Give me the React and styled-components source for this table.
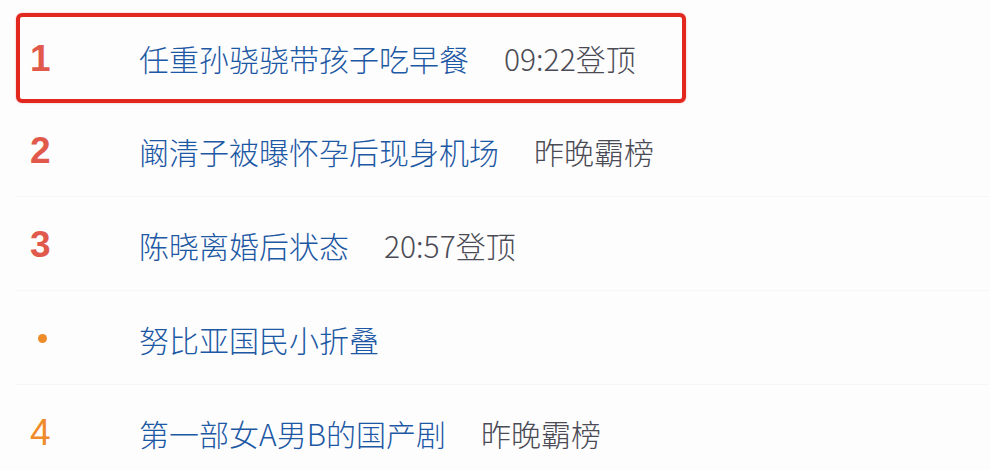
import React from "react";
import styled, { createGlobalStyle } from "styled-components";

const Global = createGlobalStyle`
  html, body { margin: 0; padding: 0; background: #fdfdfe; }
  body { font-family: "Noto Sans CJK SC", "Noto Sans", sans-serif; }
`;

const Page = styled.div`
  width: 990px;
  height: 470px;
  box-sizing: border-box;
  padding: 13px 0 0 16px;
  background: #fdfdfe;
  overflow: hidden;
`;

const List = styled.ul`
  list-style: none;
  margin: 0;
  padding: 0;
  display: flex;
  flex-direction: column;
  gap: 2px;
`;

const Row = styled.li`
  display: flex;
  align-items: center;
  box-sizing: border-box;
  height: ${(p) => (p.$hl ? "90px" : "92px")};
  width: ${(p) => (p.$hl ? "670px" : "974px")};
  padding-left: ${(p) => (p.$hl ? "8px" : "12px")};
  border: ${(p) => (p.$hl ? "4px solid #e2271f" : "none")};
  border-bottom: ${(p) => (p.$hl ? "4px solid #e2271f" : "1px solid #f5f6f9")};
  border-radius: ${(p) => (p.$hl ? "6px" : "0")};
  box-shadow: ${(p) => (p.$hl ? "0 0 2px rgba(226,39,31,0.4)" : "none")};
`;

const Rank = styled.span`
  width: 109px;
  flex: none;
  display: flex;
  align-items: center;
  font-family: "Liberation Sans", Arial, sans-serif;
  font-size: 37px;
  line-height: 1;
  font-weight: ${(p) => (p.$top ? 700 : 400)};
  color: ${(p) => (p.$top ? "#e0594a" : "#f08a2a")};
  padding-left: 2px;
`;

const Dot = styled.span`
  display: block;
  width: 9px;
  height: 9px;
  border-radius: 50%;
  background: #ee8c2a;
  margin-left: 8px;
`;

const Title = styled.span`
  font-size: 30px;
  font-weight: 300;
  line-height: 1;
  color: #1c58a3;
  white-space: nowrap;
`;

const Meta = styled.span`
  font-size: 30px;
  font-weight: 300;
  line-height: 1;
  color: #4b4b55;
  margin-left: 35px;
  white-space: nowrap;
`;

const items = [
  { rank: "1", title: "任重孙骁骁带孩子吃早餐", meta: "09:22登顶", hl: true },
  { rank: "2", title: "阚清子被曝怀孕后现身机场", meta: "昨晚霸榜" },
  { rank: "3", title: "陈晓离婚后状态", meta: "20:57登顶" },
  { rank: null, title: "努比亚国民小折叠" },
  { rank: "4", title: "第一部女A男B的国产剧", meta: "昨晚霸榜" },
];

export default function App() {
  return (
    <>
      <Global />
      <Page>
        <List>
          {items.map((it, i) => (
            <Row key={i} $hl={it.hl}>
              <Rank $top={it.rank && Number(it.rank) <= 3}>
                {it.rank ? it.rank : <Dot />}
              </Rank>
              <Title>{it.title}</Title>
              {it.meta && <Meta>{it.meta}</Meta>}
            </Row>
          ))}
        </List>
      </Page>
    </>
  );
}
